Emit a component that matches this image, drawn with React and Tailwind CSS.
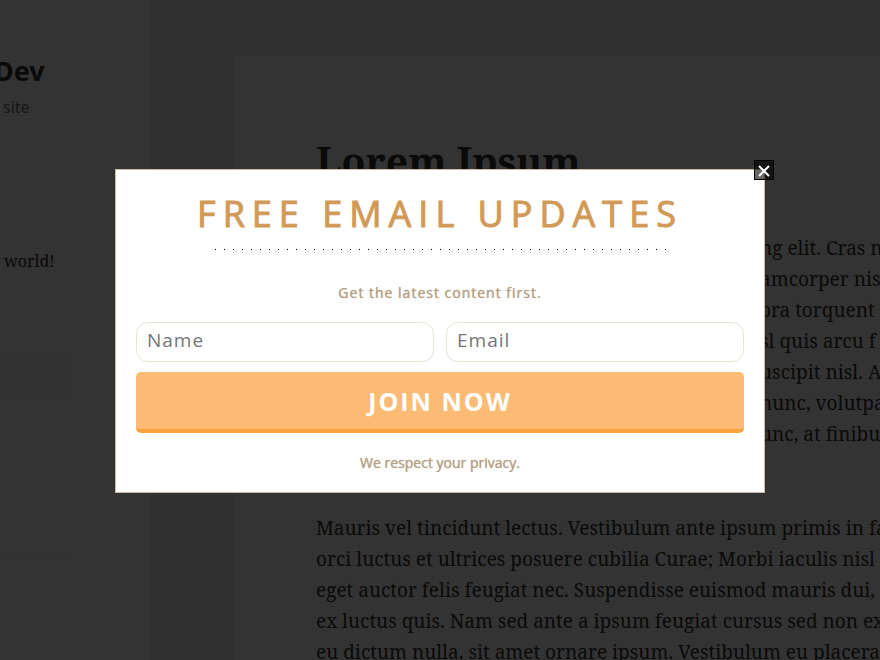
const opening = [
  'ng elit. Cras nec',
  'amcorper nisi',
  'ora torquent',
  'sl quis arcu f',
  'uscipit nisl. A',
  'nunc, volutpat',
  'unc, at finibus',
];

const closing = [
  'Mauris vel tincidunt lectus. Vestibulum ante ipsum primis in faucibus',
  'orci luctus et ultrices posuere cubilia Curae; Morbi iaculis nisl',
  'eget auctor felis feugiat nec. Suspendisse euismod mauris dui,',
  'ex luctus quis. Nam sed ante a ipsum feugiat cursus sed non ex',
  'eu dictum nulla, sit amet ornare ipsum. Vestibulum eu placerat',
];

const serif = "font-['Noto_Serif','DejaVu_Serif_Condensed','DejaVu_Serif',serif]";

function Sidebar() {
  return (
    <aside className="h-screen w-[151px] shrink-0 overflow-hidden bg-white pt-[55px] shadow-[0_0_1px_rgba(0,0,0,0.15)]">
      <h2 className="-ml-1.5 text-[27px] leading-[32px] font-bold">Dev</h2>
      <p className="mt-2 ml-[3px] text-[16px] leading-[24px] text-[#707070]">site</p>
      <p className={`${serif} mt-[129px] ml-1 text-[16px] leading-[26px]`}>world!</p>
      <div className="mt-[81px] h-[41px] w-[70px] border-y border-r border-[#eaeaea] bg-[#f7f7f7]" />
      <div className="mt-[160px] w-[70px] border-t border-[#eaeaea]" />
    </aside>
  );
}

function Article() {
  return (
    <main className={`${serif} ml-[84px] mt-[55px] h-screen min-w-0 flex-1 overflow-hidden bg-white pt-[77px] pl-[81px] whitespace-nowrap`}>
      <h1 className="text-[39px] leading-[58px] font-bold">Lorem Ipsum</h1>
      <p className="mt-[43px] pl-[444px] text-[19px] leading-[31px]">
        {opening.map((line) => (
          <span key={line} className="block">{line}</span>
        ))}
      </p>
      <p className="mt-[63px] text-[19px] leading-[31px]">
        {closing.map((line) => (
          <span key={line} className="block">{line}</span>
        ))}
      </p>
    </main>
  );
}

function Field({ label, type }) {
  return (
    <input
      type={type}
      aria-label={label}
      placeholder={label}
      className="h-10 min-w-0 flex-1 rounded-[12px] border border-[#ebe2d3] bg-white px-2.5 pb-1 text-[19px] tracking-[1px] text-[#444] placeholder:text-[#757575] outline-none"
    />
  );
}

function Popup() {
  return (
    <div className="fixed inset-0 grid place-items-center bg-black/80 pt-0.5">
      <form
        role="dialog"
        aria-label="Free email updates"
        onSubmit={(e) => e.preventDefault()}
        className="relative w-full max-w-[650px] border border-[#cdb9a0] bg-white px-5 pt-[19px] pb-[19px] text-center font-['Open_Sans',sans-serif]"
      >
        <button
          type="button"
          aria-label="Close"
          className="absolute -top-2.5 -right-2.5 grid size-5 place-items-center border border-black bg-black/60"
        >
          <svg viewBox="0 0 18 18" className="size-[18px]" fill="none" stroke="white" strokeWidth="2">
            <path d="M4 5 L14 15 M14 5 L4 15" />
          </svg>
        </button>
        <h2 className="text-[36px] leading-[50px] tracking-[7px] text-[#d29a57] [-webkit-text-stroke:1px_#d29a57]">FREE EMAIL UPDATES</h2>
        <div className="mx-auto mt-[10px] h-px w-[451px] bg-[linear-gradient(to_right,#000_1px,transparent_1px)] bg-[length:9px_1px]" />
        <p className="mt-[33px] text-[14px] leading-5 tracking-[1px] text-[#b5a084] [text-shadow:0_0_1px_#b5a084]">Get the latest content first.</p>
        <div className="mt-[19px] flex gap-3">
          <Field label="Name" type="text" />
          <Field label="Email" type="email" />
        </div>
        <button
          type="submit"
          className="mt-2.5 h-[61px] w-full rounded-[5px] border-b-4 border-[#fba43d] bg-[#fcbb74] pt-0.5 text-[25px] font-bold tracking-[2px] text-white"
        >
          JOIN NOW
        </button>
        <p className="mt-5 text-[14px] leading-5 text-[#b5a084] [text-shadow:0_0_1px_#b5a084]">We respect your privacy.</p>
      </form>
    </div>
  );
}

export default function App() {
  return (
    <div className="flex h-screen overflow-hidden bg-[#f1f1f1] font-['Noto_Sans',sans-serif] text-[#333]">
      <Sidebar />
      <Article />
      <Popup />
    </div>
  );
}
